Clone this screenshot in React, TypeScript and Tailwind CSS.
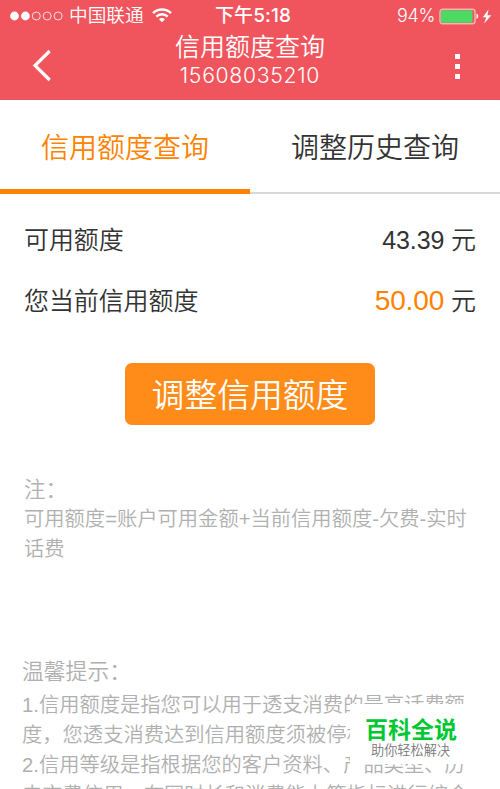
import React from 'react';

const cjk = "font-['Liberation_Sans','Noto_Sans_CJK_SC',sans-serif]";

const noteLines = ['可用额度=账户可用金额+当前信用额度-欠费-实时', '话费'];

const tipLines = [
  '1.信用额度是指您可以用于透支消费的最高话费额',
  '度，您透支消费达到信用额度须被停机。',
  '2.信用等级是指根据您的客户资料、产品类型、历',
  '史交费信用、在网时长和消费能力等指标进行综合',
];

const StatusBar: React.FC = () => (
  <div className="grid h-8 grid-cols-[205px_1fr_auto] items-center pl-[10px] pr-[7px] text-white">
    <div className="flex h-[31px] items-center self-start">
      <svg className="h-[10px] w-[54px]" viewBox="0 0 54 10">
        <circle cx="4.5" cy="5" r="4.4" fill="white" />
        <circle cx="15.4" cy="5" r="4.4" fill="white" />
        <circle cx="26.3" cy="5" r="4" fill="none" stroke="white" strokeWidth="0.8" />
        <circle cx="37.2" cy="5" r="4" fill="none" stroke="white" strokeWidth="0.8" />
        <circle cx="48.1" cy="5" r="4" fill="none" stroke="white" strokeWidth="0.8" />
      </svg>
      <span className="ml-[5px] text-[18.7px] leading-[31px]">中国联通</span>
      <svg className="ml-[8px] h-[15px] w-[20px]" viewBox="0 0 20 15" fill="none" stroke="white" strokeWidth="2.4">
        <path d="M1 5.2C6 0.3 14 0.3 19 5.2" />
        <path d="M4.3 8.6C7.6 5.4 12.4 5.4 15.7 8.6" />
        <path d="M7 11.2C8.7 9.7 11.3 9.7 13 11.2L10 14.2Z" fill="white" stroke="none" />
      </svg>
    </div>
    <span className="font-['Inter','Noto_Sans_CJK_SC',sans-serif] text-[19px] font-medium leading-[32px] tracking-[0.1px]">下午5:18</span>
    <div className="flex items-center">
      <span className="font-['Inter',sans-serif] text-[18px] font-[350] leading-8 tracking-[-0.3px]">94%</span>
      <svg className="ml-[4px] h-[17px] w-[54px]" viewBox="0 0 54 17">
        <rect x="1" y="1.2" width="35" height="14.5" rx="2.5" fill="none" stroke="white" strokeOpacity="0.55" strokeWidth="1.4" />
        <rect x="2" y="2.2" width="31.5" height="12.5" rx="1" fill="#4cd964" />
        <path d="M37.5 5.6C39.7 6.4 39.7 10.2 37.5 11Z" fill="white" />
        <path d="M49.5 1.5L43.8 9.2H47.2L45.2 15.4L52.3 7.2H48.4Z" fill="white" />
      </svg>
    </div>
  </div>
);

const Header: React.FC = () => (
  <header className="h-[100px] bg-[#f0555d] text-white">
    <StatusBar />
    <div className="grid h-[68px] grid-cols-[118px_200px_1fr] items-start pl-[32px] pr-[40px]">
      <svg className="mt-[17px] h-[33px] w-[20px]" viewBox="0 0 20 33" fill="none" stroke="white" strokeWidth="3.2">
        <path d="M17.7 2L3 16.5L17.7 31" />
      </svg>
      <div className="text-center">
        <h1 className="pt-px text-[25px] leading-[28px]">信用额度查询</h1>
        <p className="font-['Inter',sans-serif] text-[21.2px] font-[350] leading-[29px] tracking-[0.7px]">15608035210</p>
      </div>
      <div className="mt-[22px] flex flex-col items-end gap-[5px]">
        <i className="block size-[5px] bg-white" />
        <i className="block size-[5px] bg-white" />
        <i className="block size-[5px] bg-white" />
      </div>
    </div>
  </header>
);

const App: React.FC = () => {
  return (
    <div className={`relative h-[789px] w-[500px] overflow-hidden bg-white font-[350] text-[#333] ${cjk}`}>
      <Header />

      <nav className="grid h-[94px] grid-cols-2 text-center text-[28px] leading-[83px]">
        <div className="h-[94px] border-b-[5px] border-[#ff8200] pt-[7px] text-[#ff8200]">信用额度查询</div>
        <div className="h-[94px] border-b-2 border-[#d9d9d9] pt-[7px]">调整历史查询</div>
      </nav>

      <section className="px-6 pt-4 text-[25px] leading-[61px] tracking-[-0.1px]">
        <div className="flex h-[61px] justify-between">
          <span>可用额度</span>
          <span>43.39 元</span>
        </div>
        <div className="flex h-[61px] justify-between">
          <span>您当前信用额度</span>
          <span className="leading-[59px]">
            <span className="text-[28px] text-[#ff8200]">50.00</span> 元
          </span>
        </div>
      </section>

      <button className="mx-auto mt-[31px] block h-[62px] w-[250px] rounded-[7px] bg-[#ff8b19] pt-[3px] text-[32.8px] leading-[59px] text-white">
        调整信用额度
      </button>

      <section className="mt-[50px] pl-6 text-[20.3px] leading-[30px] text-[#b0b0b0]">
        <h2 className="-mb-px text-[21.5px]">注：</h2>
        {noteLines.map((line) => (
          <p key={line} className="whitespace-nowrap">{line}</p>
        ))}
      </section>

      <section className="mt-[93px] pl-[22px] text-[20.3px] leading-[30px] text-[#b0b0b0]">
        <h2 className="mb-[3px] text-[21.8px]">温馨提示：</h2>
        {tipLines.map((line) => (
          <p key={line} className="whitespace-nowrap">{line}</p>
        ))}
      </section>

      {/* Logo phủ lên góc dưới bên phải */}
      <div className="absolute left-[350px] top-[704px] h-[60px] w-[150px] bg-white pl-[15px]">
        <p className="pt-[10px] text-[23px] font-bold leading-[32px] text-[#00c832]">百科全说</p>
        <p className="pl-[6px] text-[13.2px] font-[350] leading-[10px] text-[#777]">助你轻松解决</p>
      </div>
    </div>
  );
};

export default App;
